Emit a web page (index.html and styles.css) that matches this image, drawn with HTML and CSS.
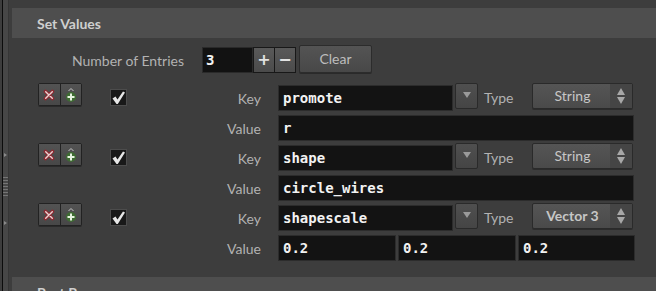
FILE: index.html
```html
<!DOCTYPE html>
<html>
<head>
<meta charset="utf-8">
<link rel="stylesheet" href="styles.css">
</head>
<body>
<div class="gutter">
  <div class="gutter-strip">
    <span class="tri tri-top"></span>
    <span class="grip"></span>
    <span class="tri tri-bot"></span>
  </div>
</div>
<div class="main">
  <div class="section-header">Set Values</div>

  <div class="count-row">
    <div class="count-label">Number of Entries</div>
    <div class="count-field">3</div>
    <div class="pm">
      <div class="pm-btn">+</div>
      <div class="pm-btn">&minus;</div>
    </div>
    <div class="clear-btn">Clear</div>
  </div>

  <div class="entries">
    <div class="entry">
      <div class="tools">
        <div class="tool"><svg width="12" height="12" viewBox="0 0 12 12"><path d="M2.5 2.5 L9.5 9.5 M9.5 2.5 L2.5 9.5" stroke="#8e2a32" stroke-width="3.6" stroke-linecap="round"/><path d="M2.7 2.7 L9.3 9.3 M9.3 2.7 L2.7 9.3" stroke="#ecd2d2" stroke-width="1.4" stroke-linecap="round"/></svg></div>
        <div class="tool"><svg width="12" height="16" viewBox="0 0 12 16"><path d="M3.5 4 L6 1.5 L8.5 4" stroke="#c8c8c8" stroke-width="1" fill="none"/><circle cx="6" cy="10" r="5" fill="#3f6b33"/><path d="M6 6.5 V13.5 M2.5 10 H9.5" stroke="#e6f2e0" stroke-width="2"/></svg></div>
      </div>
      <div class="check"><svg width="15" height="15" viewBox="0 0 15 15"><path d="M1.5 8.5 L4.5 6.5 L6.5 9.5 L12 1.5 L14 2.5 L6.8 14 L5.5 14 Z" fill="#e6e6e6"/></svg></div>
      <div class="label key-label">Key</div>
      <div class="key-line">
        <div class="field key-field">promote</div>
        <div class="drop-btn"><span class="down"></span></div>
        <div class="type-label">Type</div>
        <div class="combo"><span class="combo-text">String</span><span class="combo-arrows"><span class="up"></span><span class="dn"></span></span></div>
      </div>
      <div class="label">Value</div>
      <div class="field value-field">r</div>
    </div>

    <div class="entry">
      <div class="tools">
        <div class="tool"><svg width="12" height="12" viewBox="0 0 12 12"><path d="M2.5 2.5 L9.5 9.5 M9.5 2.5 L2.5 9.5" stroke="#8e2a32" stroke-width="3.6" stroke-linecap="round"/><path d="M2.7 2.7 L9.3 9.3 M9.3 2.7 L2.7 9.3" stroke="#ecd2d2" stroke-width="1.4" stroke-linecap="round"/></svg></div>
        <div class="tool"><svg width="12" height="16" viewBox="0 0 12 16"><path d="M3.5 4 L6 1.5 L8.5 4" stroke="#c8c8c8" stroke-width="1" fill="none"/><circle cx="6" cy="10" r="5" fill="#3f6b33"/><path d="M6 6.5 V13.5 M2.5 10 H9.5" stroke="#e6f2e0" stroke-width="2"/></svg></div>
      </div>
      <div class="check"><svg width="15" height="15" viewBox="0 0 15 15"><path d="M1.5 8.5 L4.5 6.5 L6.5 9.5 L12 1.5 L14 2.5 L6.8 14 L5.5 14 Z" fill="#e6e6e6"/></svg></div>
      <div class="label key-label">Key</div>
      <div class="key-line">
        <div class="field key-field">shape</div>
        <div class="drop-btn"><span class="down"></span></div>
        <div class="type-label">Type</div>
        <div class="combo"><span class="combo-text">String</span><span class="combo-arrows"><span class="up"></span><span class="dn"></span></span></div>
      </div>
      <div class="label">Value</div>
      <div class="field value-field">circle_wires</div>
    </div>

    <div class="entry">
      <div class="tools">
        <div class="tool"><svg width="12" height="12" viewBox="0 0 12 12"><path d="M2.5 2.5 L9.5 9.5 M9.5 2.5 L2.5 9.5" stroke="#8e2a32" stroke-width="3.6" stroke-linecap="round"/><path d="M2.7 2.7 L9.3 9.3 M9.3 2.7 L2.7 9.3" stroke="#ecd2d2" stroke-width="1.4" stroke-linecap="round"/></svg></div>
        <div class="tool"><svg width="12" height="16" viewBox="0 0 12 16"><path d="M3.5 4 L6 1.5 L8.5 4" stroke="#c8c8c8" stroke-width="1" fill="none"/><circle cx="6" cy="10" r="5" fill="#3f6b33"/><path d="M6 6.5 V13.5 M2.5 10 H9.5" stroke="#e6f2e0" stroke-width="2"/></svg></div>
      </div>
      <div class="check"><svg width="15" height="15" viewBox="0 0 15 15"><path d="M1.5 8.5 L4.5 6.5 L6.5 9.5 L12 1.5 L14 2.5 L6.8 14 L5.5 14 Z" fill="#e6e6e6"/></svg></div>
      <div class="label key-label">Key</div>
      <div class="key-line">
        <div class="field key-field">shapescale</div>
        <div class="drop-btn"><span class="down"></span></div>
        <div class="type-label">Type</div>
        <div class="combo"><span class="combo-text bold">Vector 3</span><span class="combo-arrows"><span class="up"></span><span class="dn"></span></span></div>
      </div>
      <div class="label">Value</div>
      <div class="vec">
        <div class="field">0.2</div>
        <div class="field">0.2</div>
        <div class="field">0.2</div>
      </div>
    </div>
  </div>

  <div class="section-header next">Post Process</div>
</div>
</body>
</html>
```

FILE: styles.css
```css
html, body {
  margin: 0;
  padding: 0;
}
body {
  width: 656px;
  height: 291px;
  overflow: hidden;
  background: #3d3d3d;
  display: flex;
  font-family: "Lato", "Noto Sans", sans-serif;
  font-size: 14px;
  color: #b2b2b2;
}
.gutter {
  width: 12px;
  flex: none;
  display: flex;
  padding-left: 2px;
  box-sizing: border-box;
}
.gutter-strip {
  width: 7px;
  border-left: 1px solid #0c0c0c;
  border-right: 1px solid #363636;
  background: #474747;
  display: flex;
  flex-direction: column;
  align-items: center;
  padding-top: 153px;
  box-sizing: border-box;
}
.tri {
  width: 0;
  height: 0;
  border-top: 2px solid transparent;
  border-bottom: 2px solid transparent;
  border-left: 3px solid #8a8a8a;
}
.grip {
  margin-top: 19px;
  width: 5px;
  height: 22px;
  background-image: radial-gradient(circle, #7a7a7a 0.8px, transparent 1px);
  background-size: 2.5px 3px;
}
.tri-bot {
  margin-top: 23px;
}
.main {
  flex: 1;
  padding-top: 8px;
  min-width: 0;
  height: 291px;
  box-sizing: border-box;
  overflow: hidden;
}
.section-header {
  height: 30px;
  background: #4e4e4e;
  color: #cfcfcf;
  font-weight: bold;
  font-size: 14px;
  padding-left: 25px;
  display: flex;
  align-items: center;
}
.section-header.next {
  margin-top: 16px;
  align-items: flex-start;
  padding-top: 7px;
  box-sizing: border-box;
}
.count-row {
  margin-top: 7px;
  height: 28px;
  display: flex;
  align-items: flex-end;
}
.count-label {
  width: 172px;
  text-align: right;
  align-self: center;
  padding-top: 2px;
}
.count-field {
  margin-left: 18px;
  width: 51px;
  height: 26px;
  box-sizing: border-box;
  background: #121212;
  border: 1px solid #2a2a2a;
  color: #f2f2f2;
  font-family: "DejaVu Sans Mono", monospace;
  font-weight: bold;
  font-size: 14px;
  line-height: 24px;
  padding-left: 3px;
}
.pm {
  display: flex;
  height: 26px;
  border: 1px solid #181818;
  box-sizing: border-box;
}
.pm-btn {
  width: 20px;
  background: linear-gradient(#595959, #4b4b4b);
  color: #e2e2e2;
  font-family: "DejaVu Sans", sans-serif;
  font-weight: bold;
  font-size: 16px;
  line-height: 23px;
  text-align: center;
}
.pm-btn + .pm-btn {
  border-left: 1px solid #181818;
}
.clear-btn {
  margin-left: 3px;
  align-self: flex-start;
  width: 73px;
  height: 28px;
  box-sizing: border-box;
  background: linear-gradient(#545454, #484848);
  border: 1px solid #2c2c2c;
  border-radius: 2px;
  box-shadow: 0 1px 0 #2a2a2a;
  color: #bdbdbd;
  text-align: center;
  line-height: 26px;
  font-size: 14px;
}
.entries {
  margin-top: 10px;
  padding-left: 26px;
  display: flex;
  flex-direction: column;
  gap: 2px;
}
.entry {
  display: grid;
  grid-template-columns: 44px 28px 17px 134px 17px 356px;
  grid-template-rows: 28px 26px;
  row-gap: 4px;
}
.tools {
  grid-column: 1;
  grid-row: 1;
  display: flex;
  height: 23px;
  border: 1px solid #222;
  box-sizing: border-box;
  border-radius: 2px;
  box-shadow: 0 1px 0 #2a2a2a;
}
.tool {
  flex: 1;
  background: linear-gradient(#535353, #474747);
  display: flex;
  align-items: center;
  justify-content: center;
}
.tool + .tool {
  border-left: 1px solid #222;
}
.check {
  grid-column: 3;
  grid-row: 1;
  margin-top: 6px;
  width: 17px;
  height: 17px;
  box-sizing: border-box;
  background: #181818;
  border: 1px solid #4c4c4c;
  display: flex;
  align-items: center;
  justify-content: center;
}
.label {
  grid-column: 4;
  text-align: right;
  align-self: center;
}
.key-label {
  grid-row: 1;
  padding-top: 3px;
}
.key-line {
  grid-column: 6;
  grid-row: 1;
  display: flex;
}
.field {
  height: 26px;
  box-sizing: border-box;
  background: #131313;
  border: 1px solid #2c2c2c;
  color: #f2f2f2;
  font-family: "DejaVu Sans Mono", monospace;
  font-weight: bold;
  font-size: 14px;
  line-height: 24px;
  padding-left: 4px;
  white-space: pre;
}
.key-field {
  width: 175px;
  margin-top: 2px;
}
.drop-btn {
  margin-left: 2px;
  width: 23px;
  height: 26px;
  box-sizing: border-box;
  background: linear-gradient(#4f4f4f, #454545);
  border: 1px solid #2a2a2a;
  border-radius: 2px;
  display: flex;
  align-items: center;
  justify-content: center;
}
.down {
  width: 0;
  height: 0;
  border-left: 4px solid transparent;
  border-right: 4px solid transparent;
  border-top: 6px solid #9a9a9a;
  margin-bottom: 3px;
}
.type-label {
  width: 54px;
  padding-left: 6px;
  box-sizing: border-box;
  line-height: 30px;
}
.combo {
  width: 101px;
  height: 26px;
  box-sizing: border-box;
  border: 1px solid #2a2a2a;
  border-radius: 2px;
  box-shadow: 0 1px 0 #2c2c2c;
  display: flex;
  background: linear-gradient(#555, #4a4a4a);
}
.combo-text {
  flex: 1;
  text-align: center;
  line-height: 24px;
  color: #c6c6c6;
  font-size: 14px;
  padding-left: 2px;
}
.combo-text.bold {
  font-weight: bold;
}
.combo-arrows {
  width: 22px;
  background: #454545;
  display: flex;
  flex-direction: column;
  align-items: center;
  justify-content: center;
  gap: 2px;
}
.up {
  width: 0;
  height: 0;
  border-left: 4px solid transparent;
  border-right: 4px solid transparent;
  border-bottom: 7px solid #a8a8a8;
}
.dn {
  width: 0;
  height: 0;
  border-left: 4px solid transparent;
  border-right: 4px solid transparent;
  border-top: 7px solid #a8a8a8;
}
.value-field {
  grid-column: 6;
  grid-row: 2;
}
.vec {
  grid-column: 6;
  grid-row: 2;
  display: grid;
  grid-template-columns: 118px 118px 117px;
  column-gap: 2px;
}
```
